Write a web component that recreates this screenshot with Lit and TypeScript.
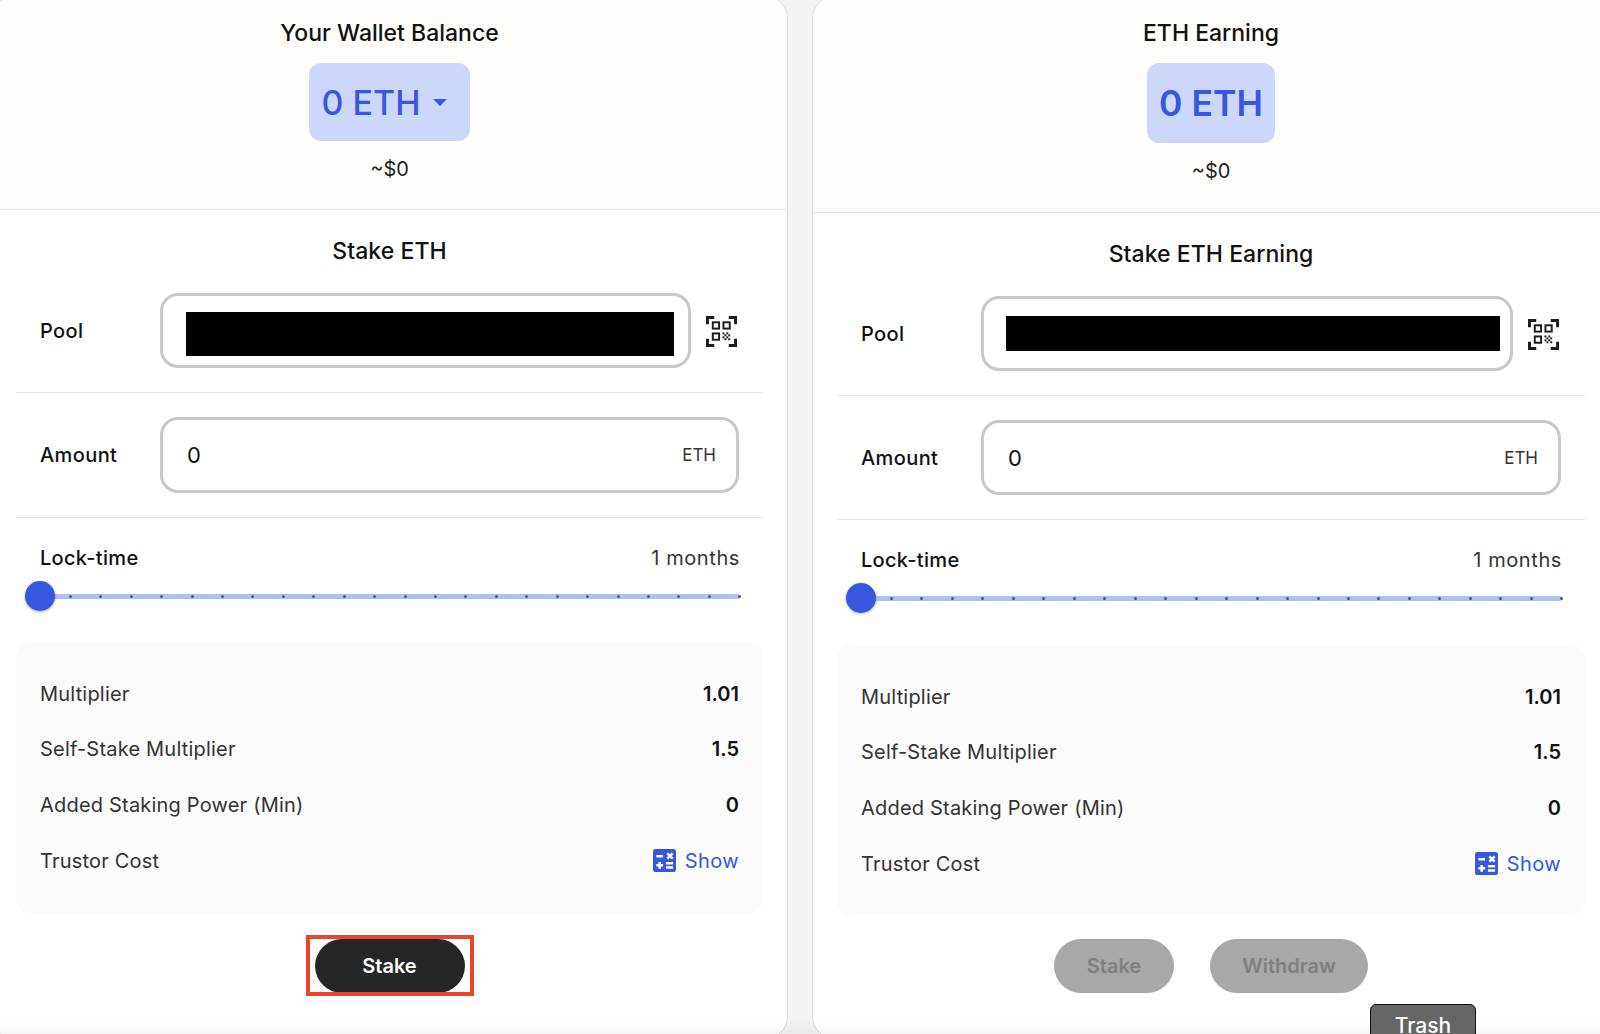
import { LitElement, html, css, svg } from 'lit';
import { customElement, property } from 'lit/decorators.js';

// dither block in the corner of the qr icon
const ditherCells = [
  [17, 17], [21, 17], [19, 19], [23, 19], [17, 21], [21, 21], [19, 23], [23, 23],
];

const qrIcon = html`<svg class="qr" viewBox="0 0 32 32" fill="none" stroke="#1c1c1c">
  ${svg`<path stroke-width="3" d="M1.5 8.5V1.5H8.5M23.5 1.5h7v7M1.5 23.5v7h7M23.5 30.5h7v-7"/>
  <rect x="7" y="6.5" width="6.5" height="6.5" stroke-width="2"/>
  <rect x="18" y="6.5" width="6.5" height="6.5" stroke-width="2"/>
  <rect x="7" y="18" width="6.5" height="6.5" stroke-width="2"/>
  ${ditherCells.map(([x, y]) => svg`<rect x=${x} y=${y} width="2" height="2" fill="#1c1c1c" stroke="none"/>`)}`}
</svg>`;

const calcIcon = html`<svg class="calc" viewBox="0 0 24 24">
  ${svg`<rect width="24" height="24" rx="3" fill="#3757e0"/>
  <path stroke="#fff" stroke-width="2.6" fill="none" d="M3.5 7.5h7M15 4.5l5.5 5.5M20.5 4.5L15 10M7 13.5v7M3.5 17h7M13.5 14.8h7.5M13.5 19.2h7.5"/>`}
</svg>`;

@customElement('stake-card')
class StakeCard extends LitElement {
  static styles = css`
    :host {
      display: block;
      height: 1045px;
      margin-top: -5px;
      box-sizing: border-box;
      background: #fff;
      border: 1px solid #dcdcdc;
      border-radius: 24px;
      overflow: hidden;
      color: #111;
      font-family: Inter, "Noto Sans", sans-serif;
    }
    .head {
      background: #fffefb;
      border-bottom: 1px solid #e3e3e3;
      display: flex;
      flex-direction: column;
      align-items: center;
      padding-top: 23px;
    }
    .title {
      font-size: 23px;
      font-weight: 500;
      line-height: 28px;
    }
    .pill {
      display: flex;
      align-items: center;
      gap: 12px;
      margin-top: 16px;
      padding: 0 23px 0 12px;
      height: 78px;
      background: #ccd7fb;
      border-radius: 12px;
      color: #3757e0;
      font-size: 34px;
      font-weight: 500;
    }
    .pill.plain {
      height: 80px;
      padding: 0 12px;
      font-size: 35.5px;
      font-weight: 600;
    }
    .caret {
      width: 0;
      height: 0;
      border-left: 7.5px solid transparent;
      border-right: 7.5px solid transparent;
      border-top: 7.5px solid #3757e0;
    }
    .usd {
      font-size: 20px;
      line-height: 24px;
      margin: 16px 0 28px;
      color: #222;
    }
    .usd.plain {
      margin-bottom: 29px;
    }
    .body {
      padding: 0 24px;
    }
    h3 {
      margin: 0;
      text-align: center;
      font-size: 23px;
      font-weight: 500;
      line-height: 28px;
      padding-top: 27px;
      letter-spacing: 0.05px;
    }
    .field {
      display: flex;
      align-items: center;
      padding-bottom: 24px;
      margin-top: 28px;
      border-bottom: 1px solid #e5e5e5;
    }
    .field + .field {
      margin-top: 24px;
    }
    .label {
      width: 120px;
      padding-left: 24px;
      font-size: 20px;
      font-weight: 500;
      letter-spacing: 0.4px;
    }
    .input {
      flex: 1;
      box-sizing: border-box;
      height: 75px;
      background: #fff;
      border: 3px solid #c8c8c8;
      border-radius: 18px;
      display: flex;
      align-items: center;
      justify-content: space-between;
      padding: 0 20px 0 24px;
      font-size: 22px;
    }
    .pool .input {
      padding: 0 14px 0 23px;
    }
    .amount .input {
      height: 76px;
      margin-right: 24px;
    }
    .amount.plain .input {
      height: 75px;
    }
    .redacted {
      flex: 1;
      height: 44px;
      margin-top: 7px;
      background: #000;
    }
    .redacted.plain {
      height: 35px;
      margin: 0 -4px 0 -1px;
    }
    .unit {
      font-size: 17px;
      color: #333;
    }
    .qr {
      width: 31px;
      height: 31px;
      margin: 2px 26px 0 15px;
      flex: none;
    }
    .lock {
      padding: 27px 23px 0 24px;
    }
    .lock-head {
      display: flex;
      justify-content: space-between;
      align-items: center;
      font-size: 20px;
      line-height: 26px;
      font-weight: 500;
      letter-spacing: 0.3px;
    }
    .lock-head span + span {
      font-weight: 400;
      letter-spacing: 0.6px;
      color: #333;
    }
    .slider {
      position: relative;
      height: 5px;
      margin-top: 23px;
      background: #b1bff5;
      border-radius: 3px;
      display: flex;
      justify-content: space-between;
      align-items: center;
    }
    .tick {
      width: 3px;
      height: 3px;
      margin: 0 -1.5px;
      border-radius: 50%;
      background: #3a55c4;
    }
    .thumb {
      position: absolute;
      left: -15px;
      top: -13px;
      width: 30px;
      height: 30px;
      border-radius: 50%;
      background: #3757e0;
      box-shadow: 0 1px 3px rgba(0, 0, 0, 0.3);
    }
    .panel {
      margin-top: 43px;
      background: #fbfbfb;
      border-radius: 14px;
      padding: 24px;
      height: 271px;
      box-sizing: border-box;
    }
    .panel.plain {
      margin-top: 44px;
      height: 270px;
    }
    .row {
      display: flex;
      justify-content: space-between;
      align-items: center;
      height: 55.6px;
      font-size: 20px;
      letter-spacing: 0.2px;
      color: #333;
    }
    .row b {
      font-weight: 600;
      letter-spacing: 0;
      color: #111;
    }
    .show {
      display: flex;
      align-items: center;
      gap: 9px;
      letter-spacing: 0.4px;
      color: #3757e0;
    }
    .calc {
      width: 23px;
      height: 23px;
    }
    .actions {
      display: flex;
      justify-content: center;
      gap: 36px;
      margin-top: 26px;
    }
    .actions.plain {
      margin-top: 24px;
    }
    .marked {
      position: relative;
      display: flex;
    }
    .marked::after {
      content: "";
      position: absolute;
      inset: -4px -9px -3px -9px;
      border: 4px solid #e8452c;
    }
    button {
      height: 54px;
      border: none;
      border-radius: 27px;
      font: 600 20px Inter, "Noto Sans", sans-serif;
      padding: 0;
    }
    .primary {
      width: 150px;
      background: #262626;
      color: #fff;
    }
    .off {
      background: #a8a8a8;
      color: #808080;
    }
    .off.stake {
      width: 120px;
    }
    .off.withdraw {
      width: 158px;
    }
  `;

  @property() title = '';
  @property() section = '';
  @property({ type: Boolean }) earning = false;

  render() {
    const plain = this.earning ? 'plain' : '';
    return html`
      <div class="head">
        <div class="title">${this.title}</div>
        <div class="pill ${plain}">
          0 ETH${this.earning ? '' : html`<span class="caret"></span>`}
        </div>
        <div class="usd ${plain}">~$0</div>
      </div>
      <div class="body">
        <h3>${this.section}</h3>
        <div class="field pool">
          <div class="label">Pool</div>
          <div class="input"><div class="redacted ${plain}"></div></div>
          ${qrIcon}
        </div>
        <div class="field amount ${plain}">
          <div class="label">Amount</div>
          <div class="input"><span>0</span><span class="unit">ETH</span></div>
        </div>
        <div class="lock">
          <div class="lock-head"><span>Lock-time</span><span>1 months</span></div>
          <div class="slider">
            ${Array.from({ length: 24 }, () => html`<span class="tick"></span>`)}
            <div class="thumb"></div>
          </div>
        </div>
        <div class="panel ${plain}">
          <div class="row"><span>Multiplier</span><b>1.01</b></div>
          <div class="row"><span>Self-Stake Multiplier</span><b>1.5</b></div>
          <div class="row"><span>Added Staking Power (Min)</span><b>0</b></div>
          <div class="row"><span>Trustor Cost</span><span class="show">${calcIcon}Show</span></div>
        </div>
        <div class="actions ${plain}">
          ${this.earning
            ? html`<button class="off stake">Stake</button><button class="off withdraw">Withdraw</button>`
            : html`<span class="marked"><button class="primary">Stake</button></span>`}
        </div>
      </div>
    `;
  }
}

@customElement('app-root')
export class AppRoot extends LitElement {
  static styles = css`
    :host {
      display: block;
      position: relative;
      width: 1600px;
      height: 1034px;
      overflow: hidden;
      background: #f3f3f3;
    }
    .cards {
      display: grid;
      grid-template-columns: 797px 798px;
      column-gap: 24px;
      margin-left: -9px;
    }
    .fade {
      position: absolute;
      left: 0;
      right: 0;
      bottom: 0;
      height: 14px;
      background: linear-gradient(rgba(0, 0, 0, 0), rgba(0, 0, 0, 0.035));
    }
    .trash {
      position: absolute;
      left: 1370px;
      top: 1004px;
      width: 106px;
      height: 44px;
      box-sizing: border-box;
      background: #666;
      color: #fff;
      border: 1px solid #111;
      border-radius: 6px;
      text-align: center;
      font: 500 21px/42px Inter, sans-serif;
    }
  `;

  render() {
    return html`
      <div class="cards">
        <stake-card title="Your Wallet Balance" section="Stake ETH"></stake-card>
        <stake-card title="ETH Earning" section="Stake ETH Earning" earning></stake-card>
      </div>
      <div class="fade"></div>
      <div class="trash">Trash</div>
    `;
  }
}
